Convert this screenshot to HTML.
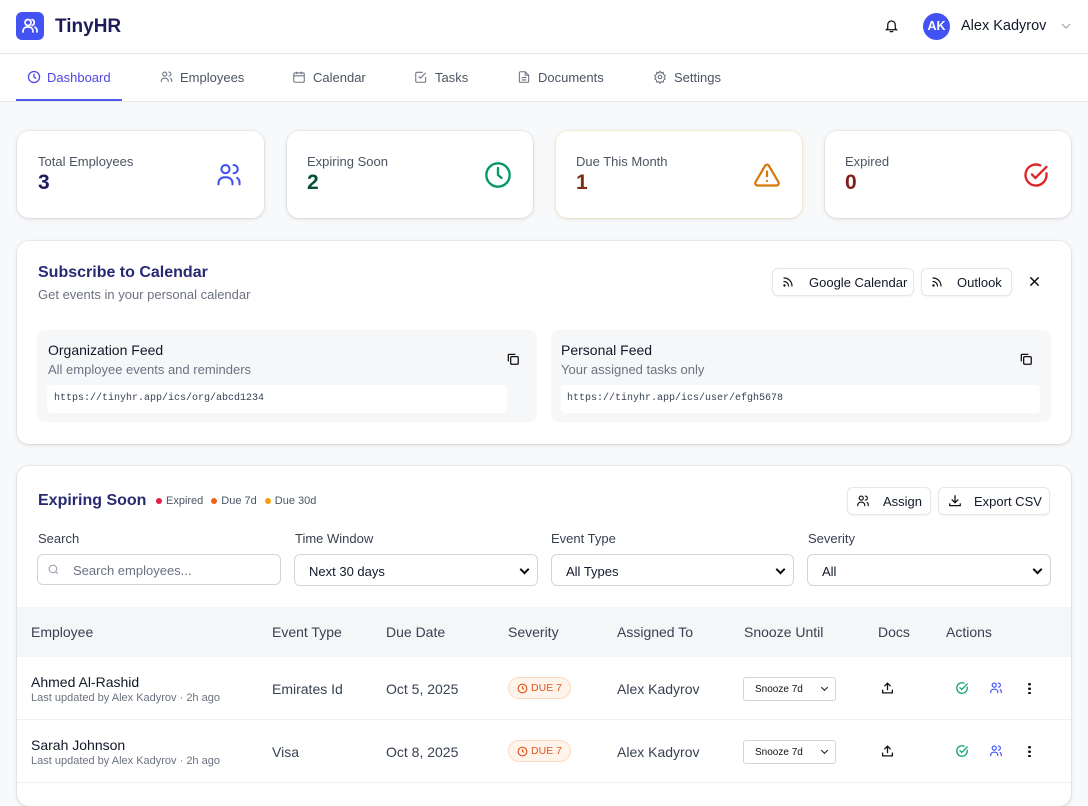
<!DOCTYPE html>
<html><head><meta charset="utf-8"><style>
*{box-sizing:border-box;margin:0;padding:0}
body{width:1088px;height:794px;overflow:hidden;background:#f8f9fb;font-family:"Liberation Sans",Arial,sans-serif;color:#1f2937;position:relative}
.a{position:absolute}
svg{display:block}
.card{position:absolute;background:#fff;border-radius:12px;box-shadow:0 1px 4px rgba(0,0,0,.12),0 0 0 1px rgba(0,0,0,.04)}
.lbl{font-size:13px;color:#4b5563}
.num{font-size:21px;font-weight:bold}
.btn{position:absolute;background:#fff;border:1px solid #e5e7eb;border-radius:6px;font-size:13px;color:#111827;display:flex;align-items:center;box-shadow:0 1px 2px rgba(0,0,0,.05)}
.feed{position:absolute;background:#f6f7f9;border-radius:8px}
.mono{font-family:"Liberation Mono",monospace;font-size:10px;color:#374151}
.sel{position:absolute;height:32px;border:1px solid #d1d5db;border-radius:6px;background:#fff;font-size:13px;color:#111827;padding:9px 14px}
.sel:after{content:"";position:absolute;right:9px;top:11px;width:5px;height:5px;border-right:2px solid #111;border-bottom:2px solid #111;transform:rotate(45deg)}
.th{position:absolute;top:624px;font-size:14px;color:#374151}
.td{position:absolute;font-size:14px;color:#374151}
.badge{position:absolute;width:63px;height:22px;border:1px solid #fcd9c0;background:#fff4ec;border-radius:11px;color:#e0551c;font-size:10.5px;display:flex;align-items:center;justify-content:center;gap:3px}
.snz{position:absolute;width:93px;height:24px;border:1px solid #d1d5db;border-radius:3px;font-size:10px;color:#111;padding:6px 11px;background:#fff}
.snz:after{content:"";position:absolute;right:8px;top:7px;width:4px;height:4px;border-right:1.6px solid #111;border-bottom:1.6px solid #111;transform:rotate(45deg)}
</style></head><body>
<!-- header -->
<div class="a" style="left:0;top:0;width:1088px;height:54px;background:#fff;border-bottom:1px solid #e5e7eb"></div>
<div class="a" style="left:16px;top:12px;width:28px;height:28px;background:#4353f3;border-radius:6px"><svg width="28" height="28" viewBox="0 0 28 28" fill="none" stroke="#fff" stroke-width="1.7" stroke-linecap="round"><circle cx="12" cy="10.5" r="3"/><path d="M7 20v-1a4 4 0 0 1 4-4h2a4 4 0 0 1 4 4v1M16 7.6a3 3 0 0 1 0 5.8M19 15.2a4 4 0 0 1 2 3.8v1"/></svg></div>
<div class="a" style="left:55px;top:16px;font-size:19px;font-weight:bold;color:#1e1b5a">TinyHR</div>
<svg class="a" style="left:884px;top:18px" width="15" height="16" viewBox="0 0 24 24" fill="none" stroke="#111" stroke-width="2" stroke-linecap="round"><path d="M6 16V10a6 6 0 0 1 12 0v6l2 2H4zM10 21h4"/></svg>
<div class="a" style="left:923px;top:13px;width:27px;height:27px;border-radius:50%;background:#4353f3;color:#fff;font-size:12.5px;font-weight:bold;text-align:center;line-height:27px">AK</div>
<div class="a" style="left:961px;top:18px;font-size:14.5px;color:#111827">Alex Kadyrov</div>
<svg class="a" style="left:1061px;top:23px;z-index:5" width="10" height="6" viewBox="0 0 10 6" fill="none" stroke="#9ca3af" stroke-width="1.2"><path d="M1 1l4 4 4-4"/></svg>
<!-- nav -->
<div class="a" style="left:0;top:54px;width:1088px;height:48px;background:#fff;border-bottom:1px solid #e5e7eb"></div>
<div class="a" style="left:16px;top:99px;width:106px;height:2px;background:#4f5bea"></div>
<svg class="a" style="left:27px;top:70px" width="14" height="14" viewBox="0 0 24 24" fill="none" stroke="#4f46e5" stroke-width="2.2" stroke-linecap="round"><circle cx="12" cy="12" r="9.5"/><path d="M12 7v5l3 2"/></svg>
<div class="a" style="left:47px;top:70px;font-size:13px;color:#4f46e5">Dashboard</div>
<svg class="a" style="left:159px;top:70px" width="15" height="14" viewBox="0 0 24 24" fill="none" stroke="#6b7280" stroke-width="1.8" stroke-linecap="round"><circle cx="9" cy="7" r="3.5"/><path d="M3 20v-1a5 5 0 0 1 5-5h2a5 5 0 0 1 5 5v1M16 3.5a3.5 3.5 0 0 1 0 7M19 14.5a5 5 0 0 1 2 4.5v1"/></svg>
<div class="a" style="left:180px;top:70px;font-size:13px;color:#4b5563">Employees</div>
<svg class="a" style="left:292px;top:70px" width="14" height="14" viewBox="0 0 24 24" fill="none" stroke="#6b7280" stroke-width="1.8"><rect x="3" y="5" width="18" height="16" rx="2"/><path d="M3 10h18M8 3v4M16 3v4"/></svg>
<div class="a" style="left:313px;top:70px;font-size:13px;color:#4b5563">Calendar</div>
<svg class="a" style="left:414px;top:70px" width="14" height="14" viewBox="0 0 24 24" fill="none" stroke="#6b7280" stroke-width="1.8"><path d="M20 12v7a2 2 0 0 1-2 2H5a2 2 0 0 1-2-2V6a2 2 0 0 1 2-2h10"/><path d="M8 11l3 3 9-9"/></svg>
<div class="a" style="left:435px;top:70px;font-size:13px;color:#4b5563">Tasks</div>
<svg class="a" style="left:517px;top:70px" width="14" height="14" viewBox="0 0 24 24" fill="none" stroke="#6b7280" stroke-width="1.8"><path d="M14 3H6a2 2 0 0 0-2 2v14a2 2 0 0 0 2 2h12a2 2 0 0 0 2-2V9z"/><path d="M14 3v6h6M8 13h8M8 17h8"/></svg>
<div class="a" style="left:538px;top:70px;font-size:13px;color:#4b5563">Documents</div>
<svg class="a" style="left:653px;top:70px" width="14" height="14" viewBox="0 0 24 24" fill="none" stroke="#6b7280" stroke-width="1.8"><circle cx="12" cy="12" r="3"/><path d="M12 2l2 3 3.5-1 .5 3.5 3 2-2 3 2 3-3 2-.5 3.5-3.5-1-2 3-2-3-3.5 1-.5-3.5-3-2 2-3-2-3 3-2 .5-3.5 3.5 1z"/></svg>
<div class="a" style="left:674px;top:70px;font-size:13px;color:#4b5563">Settings</div>
<!-- stat cards -->
<div class="card" style="left:17px;top:131px;width:247px;height:87px"></div>
<div class="a lbl" style="left:38px;top:154px">Total Employees</div>
<div class="a num" style="left:38px;top:171px;color:#1e1b5a">3</div>
<svg class="a" style="left:215px;top:161px" width="28" height="28" viewBox="0 0 24 24" fill="none" stroke="#4353f3" stroke-width="1.8" stroke-linecap="round"><circle cx="9" cy="7" r="3.5"/><path d="M3 20v-1a5 5 0 0 1 5-5h2a5 5 0 0 1 5 5v1M16 3.5a3.5 3.5 0 0 1 0 7M19 14.5a5 5 0 0 1 2 4.5v1"/></svg>
<div class="card" style="left:287px;top:131px;width:246px;height:87px"></div>
<div class="a lbl" style="left:307px;top:154px">Expiring Soon</div>
<div class="a num" style="left:307px;top:171px;color:#064e3b">2</div>
<svg class="a" style="left:484px;top:161px" width="28" height="28" viewBox="0 0 24 24" fill="none" stroke="#059669" stroke-width="2" stroke-linecap="round"><circle cx="12" cy="12" r="10"/><path d="M12 6v6l3 2.5"/></svg>
<div class="card" style="left:556px;top:131px;width:246px;height:87px;box-shadow:0 1px 4px rgba(0,0,0,.1),0 0 0 1px #fbf2d8"></div>
<div class="a lbl" style="left:576px;top:154px">Due This Month</div>
<div class="a num" style="left:576px;top:171px;color:#7c2d12">1</div>
<svg class="a" style="left:753px;top:161px" width="28" height="28" viewBox="0 0 24 24" fill="none" stroke="#d97706" stroke-width="1.9" stroke-linecap="round" stroke-linejoin="round"><path d="M10.3 4.2L2.2 18a2 2 0 0 0 1.7 3h16.2a2 2 0 0 0 1.7-3L13.7 4.2a2 2 0 0 0-3.4 0z"/><path d="M12 9v4M12 17h.01"/></svg>
<div class="card" style="left:825px;top:131px;width:246px;height:87px"></div>
<div class="a lbl" style="left:845px;top:154px">Expired</div>
<div class="a num" style="left:845px;top:171px;color:#7f1d1d">0</div>
<svg class="a" style="left:1022px;top:161px" width="28" height="28" viewBox="0 0 24 24" fill="none" stroke="#dc2626" stroke-width="2" stroke-linecap="round"><path d="M21 10.5V12a9 9 0 1 1-5.3-8.2"/><path d="M8.5 11.5l3 3L21 5"/></svg>
<!-- subscribe -->
<div class="card" style="left:17px;top:241px;width:1054px;height:203px"></div>
<div class="a" style="left:38px;top:264px;font-size:16px;font-weight:bold;color:#272a73">Subscribe to Calendar</div>
<div class="a" style="left:38px;top:287px;font-size:13px;color:#6b7280">Get events in your personal calendar</div>
<div class="btn" style="left:772px;top:268px;width:142px;height:28px;padding-left:36px">Google Calendar</div>
<svg class="a" style="left:782px;top:276px" width="12" height="12" viewBox="0 0 24 24" fill="none" stroke="#111" stroke-width="2.4" stroke-linecap="round"><path d="M4 11a9 9 0 0 1 9 9M4 4a16 16 0 0 1 16 16"/><circle cx="5" cy="19" r="1.2"/></svg>
<div class="btn" style="left:921px;top:268px;width:91px;height:28px;padding-left:35px">Outlook</div>
<svg class="a" style="left:931px;top:276px" width="12" height="12" viewBox="0 0 24 24" fill="none" stroke="#111" stroke-width="2.4" stroke-linecap="round"><path d="M4 11a9 9 0 0 1 9 9M4 4a16 16 0 0 1 16 16"/><circle cx="5" cy="19" r="1.2"/></svg>
<svg class="a" style="left:1029px;top:276px" width="11" height="11" viewBox="0 0 12 12" stroke="#111" stroke-width="1.7"><path d="M1.5 1.5l9 9M10.5 1.5l-9 9"/></svg>
<div class="feed" style="left:37px;top:330px;width:500px;height:92px"></div>
<div class="a" style="left:48px;top:342px;font-size:14px;color:#111827">Organization Feed</div>
<div class="a" style="left:48px;top:362px;font-size:13px;color:#6b7280">All employee events and reminders</div>
<div class="a" style="left:47px;top:385px;width:460px;height:28px;background:#fff;border-radius:4px"></div>
<div class="a mono" style="left:54px;top:393px">https://tinyhr.app/ics/org/abcd1234</div>
<svg class="a" style="left:506px;top:352px" width="14" height="14" viewBox="0 0 24 24" fill="none" stroke="#111" stroke-width="2.2"><rect x="8" y="8" width="13" height="13" rx="2"/><path d="M4 16V5a1 1 0 0 1 1-1h11"/></svg>
<div class="feed" style="left:551px;top:330px;width:500px;height:92px"></div>
<div class="a" style="left:561px;top:342px;font-size:14px;color:#111827">Personal Feed</div>
<div class="a" style="left:561px;top:362px;font-size:13px;color:#6b7280">Your assigned tasks only</div>
<div class="a" style="left:561px;top:385px;width:479px;height:28px;background:#fff;border-radius:4px"></div>
<div class="a mono" style="left:567px;top:393px">https://tinyhr.app/ics/user/efgh5678</div>
<svg class="a" style="left:1019px;top:352px" width="14" height="14" viewBox="0 0 24 24" fill="none" stroke="#111" stroke-width="2.2"><rect x="8" y="8" width="13" height="13" rx="2"/><path d="M4 16V5a1 1 0 0 1 1-1h11"/></svg>
<!-- expiring -->
<div class="card" style="left:17px;top:466px;width:1054px;height:340px;overflow:hidden"></div>
<div class="a" style="left:38px;top:492px;font-size:16px;font-weight:bold;color:#272a73">Expiring Soon</div>
<div class="a" style="left:156px;top:495px;font-size:11px;color:#4b5563;display:flex;align-items:center;gap:4px"><span style="width:6px;height:6px;border-radius:50%;background:#e11d48"></span>Expired <span style="width:6px;height:6px;border-radius:50%;background:#f06313;margin-left:4px"></span>Due 7d <span style="width:6px;height:6px;border-radius:50%;background:#f59e0b;margin-left:4px"></span>Due 30d</div>
<div class="btn" style="left:847px;top:487px;width:84px;height:28px;padding-left:35px">Assign</div>
<svg class="a" style="left:856px;top:494px" width="14" height="14" viewBox="0 0 24 24" fill="none" stroke="#111" stroke-width="2" stroke-linecap="round"><circle cx="9" cy="7" r="3.5"/><path d="M3 20v-1a5 5 0 0 1 5-5h2a5 5 0 0 1 5 5v1M16 3.5a3.5 3.5 0 0 1 0 7M19 14.5a5 5 0 0 1 2 4.5v1"/></svg>
<div class="btn" style="left:938px;top:487px;width:112px;height:28px;padding-left:35px">Export CSV</div>
<svg class="a" style="left:948px;top:494px" width="14" height="14" viewBox="0 0 24 24" fill="none" stroke="#111" stroke-width="2.2" stroke-linecap="round"><path d="M12 3v12M7 10l5 5 5-5M3 17v3h18v-3"/></svg>
<div class="a" style="left:38px;top:531px;font-size:13px;color:#374151">Search</div>
<div class="a" style="left:295px;top:531px;font-size:13px;color:#374151">Time Window</div>
<div class="a" style="left:551px;top:531px;font-size:13px;color:#374151">Event Type</div>
<div class="a" style="left:808px;top:531px;font-size:13px;color:#374151">Severity</div>
<div class="a" style="left:37px;top:554px;width:244px;height:31px;border:1px solid #d1d5db;border-radius:6px;background:#fff"></div>
<svg class="a" style="left:47px;top:563px" width="13" height="13" viewBox="0 0 24 24" fill="none" stroke="#9ca3af" stroke-width="2"><circle cx="11" cy="11" r="7"/><path d="M20 20l-4-4"/></svg>
<div class="a" style="left:73px;top:563px;font-size:13px;color:#6b7280">Search employees...</div>
<div class="sel" style="left:294px;top:554px;width:244px">Next 30 days</div>
<div class="sel" style="left:551px;top:554px;width:243px">All Types</div>
<div class="sel" style="left:807px;top:554px;width:244px">All</div>
<!-- table -->
<div class="a" style="left:17px;top:607px;width:1054px;height:50px;background:#f5f6f8"></div>
<div class="th" style="left:31px">Employee</div>
<div class="th" style="left:272px">Event Type</div>
<div class="th" style="left:386px">Due Date</div>
<div class="th" style="left:508px">Severity</div>
<div class="th" style="left:617px">Assigned To</div>
<div class="th" style="left:744px">Snooze Until</div>
<div class="th" style="left:878px">Docs</div>
<div class="th" style="left:946px">Actions</div>
<div class="a" style="left:17px;top:719px;width:1054px;height:1px;background:#eef0f3"></div>
<div class="a" style="left:17px;top:782px;width:1054px;height:1px;background:#eef0f3"></div>

<div class="td" style="left:31px;top:674px;color:#111827">Ahmed Al-Rashid</div>
<div class="a" style="left:31px;top:692px;font-size:11px;color:#6b7280">Last updated by Alex Kadyrov · 2h ago</div>
<div class="td" style="left:272px;top:681px">Emirates Id</div>
<div class="td" style="left:386px;top:681px">Oct 5, 2025</div>
<div class="badge" style="left:508px;top:677px"><svg width="11" height="11" viewBox="0 0 24 24" fill="none" stroke="#e0551c" stroke-width="2.5"><circle cx="12" cy="12" r="9.5"/><path d="M12 7v5l3 2"/></svg>DUE 7</div>
<div class="td" style="left:617px;top:681px">Alex Kadyrov</div>
<div class="snz" style="left:743px;top:677px">Snooze 7d</div>
<svg class="a" style="left:881px;top:681px" width="13" height="14" viewBox="0 0 24 24" fill="none" stroke="#111" stroke-width="2.4" stroke-linecap="round"><path d="M12 15V3M7 8l5-5 5 5M3 16v5h18v-5"/></svg>
<svg class="a" style="left:955px;top:681px" width="14" height="14" viewBox="0 0 24 24" fill="none" stroke="#10a36b" stroke-width="2.2" stroke-linecap="round"><path d="M21 10.5V12a9 9 0 1 1-5.3-8.2"/><path d="M8.5 11.5l3 3L21 5"/></svg>
<svg class="a" style="left:989px;top:681px" width="14" height="14" viewBox="0 0 24 24" fill="none" stroke="#4353f3" stroke-width="2" stroke-linecap="round"><circle cx="9" cy="7" r="3.5"/><path d="M3 20v-1a5 5 0 0 1 5-5h2a5 5 0 0 1 5 5v1M16 3.5a3.5 3.5 0 0 1 0 7M19 14.5a5 5 0 0 1 2 4.5v1"/></svg>
<div class="a" style="left:1028px;top:682px;width:3px;height:12px;background:radial-gradient(circle,#111 1.3px,transparent 1.5px) 0 0/3px 4.5px"></div>

<div class="td" style="left:31px;top:737px;color:#111827">Sarah Johnson</div>
<div class="a" style="left:31px;top:755px;font-size:11px;color:#6b7280">Last updated by Alex Kadyrov · 2h ago</div>
<div class="td" style="left:272px;top:744px">Visa</div>
<div class="td" style="left:386px;top:744px">Oct 8, 2025</div>
<div class="badge" style="left:508px;top:740px"><svg width="11" height="11" viewBox="0 0 24 24" fill="none" stroke="#e0551c" stroke-width="2.5"><circle cx="12" cy="12" r="9.5"/><path d="M12 7v5l3 2"/></svg>DUE 7</div>
<div class="td" style="left:617px;top:744px">Alex Kadyrov</div>
<div class="snz" style="left:743px;top:740px">Snooze 7d</div>
<svg class="a" style="left:881px;top:744px" width="13" height="14" viewBox="0 0 24 24" fill="none" stroke="#111" stroke-width="2.4" stroke-linecap="round"><path d="M12 15V3M7 8l5-5 5 5M3 16v5h18v-5"/></svg>
<svg class="a" style="left:955px;top:744px" width="14" height="14" viewBox="0 0 24 24" fill="none" stroke="#10a36b" stroke-width="2.2" stroke-linecap="round"><path d="M21 10.5V12a9 9 0 1 1-5.3-8.2"/><path d="M8.5 11.5l3 3L21 5"/></svg>
<svg class="a" style="left:989px;top:744px" width="14" height="14" viewBox="0 0 24 24" fill="none" stroke="#4353f3" stroke-width="2" stroke-linecap="round"><circle cx="9" cy="7" r="3.5"/><path d="M3 20v-1a5 5 0 0 1 5-5h2a5 5 0 0 1 5 5v1M16 3.5a3.5 3.5 0 0 1 0 7M19 14.5a5 5 0 0 1 2 4.5v1"/></svg>
<div class="a" style="left:1028px;top:745px;width:3px;height:12px;background:radial-gradient(circle,#111 1.3px,transparent 1.5px) 0 0/3px 4.5px"></div>
</body></html>
